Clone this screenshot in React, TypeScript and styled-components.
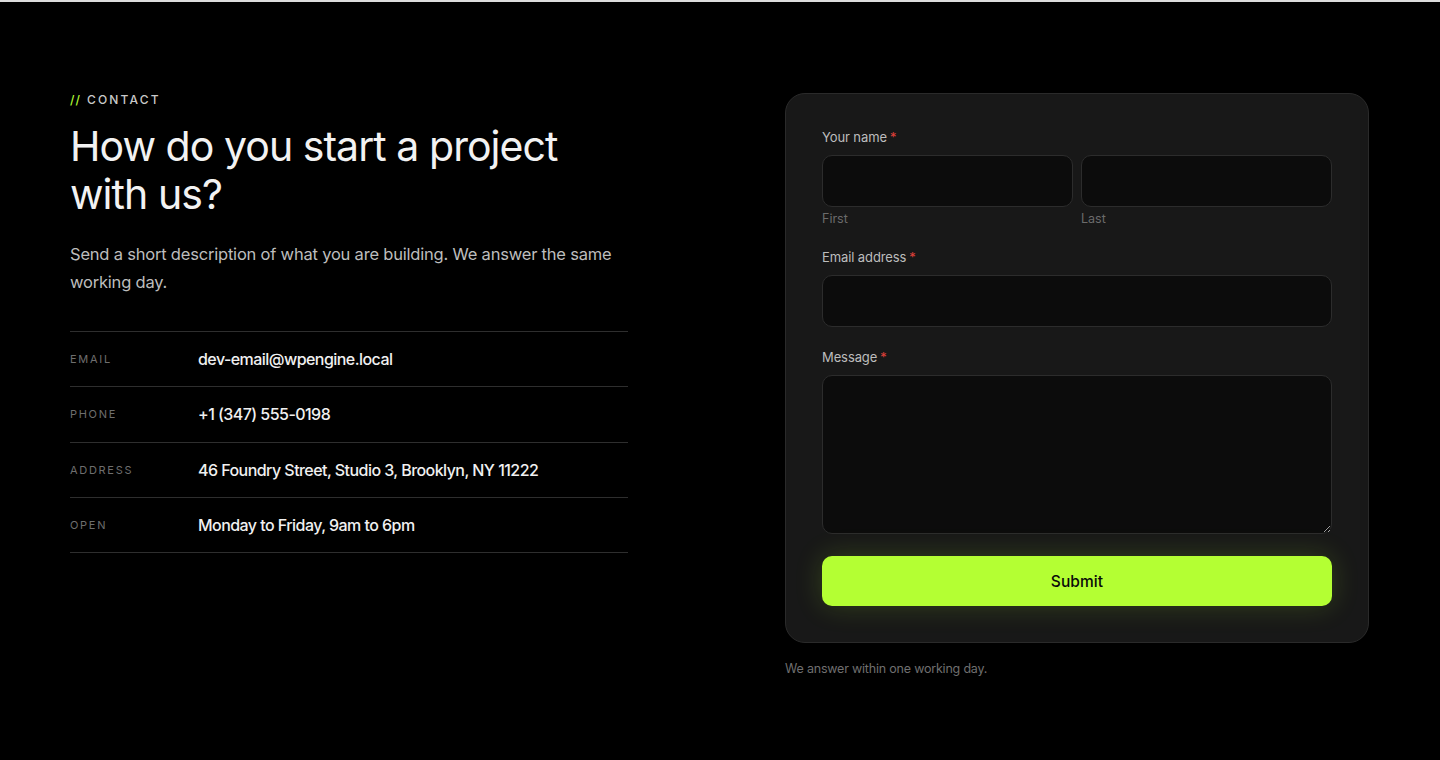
import styled, { createGlobalStyle } from "styled-components"

const lime = "#b4ff33"

const GlobalStyle = createGlobalStyle`
  html, body {
    margin: 0;
    padding: 0;
    background: #000;
  }
  body {
    font-family: Inter, "Noto Sans", "Liberation Sans", sans-serif;
    color: #ededed;
    -webkit-font-smoothing: antialiased;
  }
  * {
    box-sizing: border-box;
  }
`

const Page = styled.main`
  min-height: 760px;
  background: #000;
  border-top: 2px solid #dcdcdc;
  padding: 90px 71px 0 70px;
`

const Section = styled.section`
  display: grid;
  grid-template-columns: 558px 584px;
  justify-content: space-between;
  align-items: start;
`

const Intro = styled.div`
  display: flex;
  flex-direction: column;
`

const Eyebrow = styled.div`
  font-size: 12px;
  font-weight: 500;
  letter-spacing: 2.2px;
  color: #c9c9c9;
  line-height: 16px;
  span {
    color: ${lime};
    margin-right: 6px;
    letter-spacing: 1px;
  }
`

const Heading = styled.h2`
  margin: 14px 0 0;
  font-size: 41px;
  font-weight: 400;
  line-height: 48px;
  letter-spacing: -0.95px;
  color: #f2f2f2;
`

const Lead = styled.p`
  margin: 22px 0 0;
  font-size: 16.5px;
  line-height: 28px;
  color: #bdbdbd;
  letter-spacing: -0.2px;
`

const Details = styled.dl`
  margin: 35px 0 0;
  border-top: 1px solid #2e2e2e;
`

const DetailRow = styled.div`
  display: grid;
  grid-template-columns: 128px 1fr;
  align-items: center;
  height: 55.3px;
  border-bottom: 1px solid #2e2e2e;
`

const DetailLabel = styled.dt`
  font-size: 11px;
  letter-spacing: 1.7px;
  color: #6e6e6e;
  text-transform: uppercase;
`

const DetailValue = styled.dd`
  margin: 0;
  font-size: 16px;
  font-weight: 500;
  letter-spacing: -0.55px;
  color: #f0f0f0;
`

const Aside = styled.div`
  margin-top: 1px;
  display: flex;
  flex-direction: column;
`

const Card = styled.form`
  background: #181818;
  border: 1px solid #2a2a2a;
  border-radius: 20px;
  padding: 34px 36px 36px;
  display: flex;
  flex-direction: column;
`

const Field = styled.div`
  display: flex;
  flex-direction: column;
  margin-bottom: 21px;
`

const Label = styled.label`
  font-size: 13px;
  line-height: 18px;
  color: #bdbdbd;
  margin-bottom: 9px;
  letter-spacing: -0.1px;
  em {
    font-style: normal;
    color: #e0403a;
    margin-left: 3px;
  }
`

const NameRow = styled.div`
  display: grid;
  grid-template-columns: 1fr 1fr;
  gap: 8px;
`

const Sub = styled.div`
  display: flex;
  flex-direction: column;
`

const Hint = styled.span`
  margin-top: 4px;
  font-size: 12.5px;
  line-height: 16px;
  color: #6b6b6b;
`

const Input = styled.input`
  width: 100%;
  height: 52px;
  background: #0c0c0c;
  border: 1px solid #2c2c2c;
  border-radius: 10px;
  color: #eee;
  font: inherit;
  padding: 0 14px;
  outline: none;
`

const TextArea = styled.textarea`
  width: 100%;
  height: 159px;
  background: #0c0c0c;
  border: 1px solid #2c2c2c;
  border-radius: 10px;
  color: #eee;
  font: inherit;
  padding: 12px 14px;
  outline: none;
  resize: vertical;
  display: block;
`

const Submit = styled.button`
  margin-top: 1px;
  height: 50px;
  border: none;
  border-radius: 10px;
  background: ${lime};
  color: #0a0a0a;
  font-family: inherit;
  font-size: 15.5px;
  font-weight: 500;
  letter-spacing: 0.1px;
  box-shadow: 0 0 28px rgba(180, 255, 51, 0.18);
  cursor: pointer;
`

const Note = styled.p`
  margin: 18px 0 0;
  font-size: 12.5px;
  color: #6f6f6f;
  letter-spacing: -0.2px;
`

const details = [
  { label: "Email", value: "dev-email@wpengine.local" },
  { label: "Phone", value: "+1 (347) 555-0198" },
  { label: "Address", value: "46 Foundry Street, Studio 3, Brooklyn, NY 11222" },
  { label: "Open", value: "Monday to Friday, 9am to 6pm" },
]

export default function App() {
  return (
    <>
      <GlobalStyle />
      <Page>
        <Section>
          <Intro>
            <Eyebrow><span>//</span>CONTACT</Eyebrow>
            <Heading>How do you start a project<br />with us?</Heading>
            <Lead>
              Send a short description of what you are building. We answer the same working day.
            </Lead>
            <Details>
              {details.map(d => (
                <DetailRow key={d.label}>
                  <DetailLabel>{d.label}</DetailLabel>
                  <DetailValue>{d.value}</DetailValue>
                </DetailRow>
              ))}
            </Details>
          </Intro>

          <Aside>
            <Card onSubmit={e => e.preventDefault()}>
              <Field>
                <Label>Your name<em>*</em></Label>
                <NameRow>
                  <Sub>
                    <Input />
                    <Hint>First</Hint>
                  </Sub>
                  <Sub>
                    <Input />
                    <Hint>Last</Hint>
                  </Sub>
                </NameRow>
              </Field>
              <Field>
                <Label>Email address<em>*</em></Label>
                <Input type="email" />
              </Field>
              <Field>
                <Label>Message<em>*</em></Label>
                <TextArea />
              </Field>
              <Submit type="submit">Submit</Submit>
            </Card>
            <Note>We answer within one working day.</Note>
          </Aside>
        </Section>
      </Page>
    </>
  )
}
